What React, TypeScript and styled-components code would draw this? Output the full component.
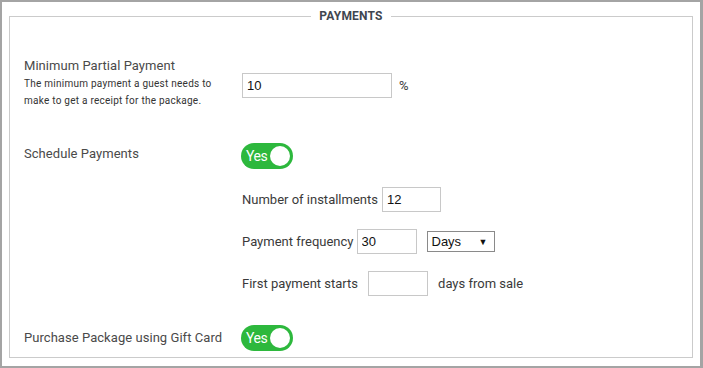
import React from "react";
import styled, { createGlobalStyle } from "styled-components";

const GlobalStyle = createGlobalStyle`
    html, body {
        margin: 0;
        padding: 0;
        background: #ffffff;
    }
    * {
        box-sizing: border-box;
    }
`;

const StyledFrame = styled.div`
    width: 703px;
    height: 368px;
    display: flex;
    flex-direction: column;
    border: 2px solid #a4a4a4;
    border-right-width: 3px;
    padding: 7px 7px 8px 7px;
    background: #fff;
    font-family: Roboto, "Liberation Sans", sans-serif;
    color: #444;
`;
StyledFrame.displayName = "StyledFrame";

const StyledFieldset = styled.fieldset`
    flex: 1;
    margin: 0;
    padding: 0 14px;
    border: 1px solid #cbcbcb;
    min-width: 0;
    > legend {
        margin: 0 auto;
        padding: 0 8px;
        font-size: 12px;
        line-height: 14px;
        font-weight: 700;
        color: #3f4650;
        letter-spacing: 0.2px;
    }
`;
StyledFieldset.displayName = "StyledFieldset";

const StyledRow = styled.div<{ $top: number; $align?: string }>`
    display: grid;
    grid-template-columns: 218px 1fr;
    align-items: ${props => props.$align || "center"};
    margin-top: ${props => props.$top}px;
`;
StyledRow.displayName = "StyledRow";

const StyledTitle = styled.div`
    font-size: 13px;
    line-height: 18px;
    color: #4a4a4a;
    letter-spacing: 0.05px;
`;
StyledTitle.displayName = "StyledTitle";

const StyledDescription = styled.div`
    font-size: 10px;
    line-height: 17px;
    color: #333;
    letter-spacing: 0.25px;
`;
StyledDescription.displayName = "StyledDescription";

const StyledControls = styled.div<{ $top?: number }>`
    display: flex;
    align-items: center;
    gap: 7px;
    margin-top: ${props => props.$top || 0}px;
    font-size: 13px;
    color: #3a3a3a;
`;
StyledControls.displayName = "StyledControls";

const StyledSubList = styled.div`
    display: flex;
    flex-direction: column;
    gap: 17px;
    margin-top: 18px;
`;
StyledSubList.displayName = "StyledSubList";

const StyledSubRow = styled.div<{ $gap: number }>`
    display: flex;
    align-items: center;
    height: 25px;
    gap: ${props => props.$gap}px;
    font-size: 13px;
    color: #3a3a3a;
`;
StyledSubRow.displayName = "StyledSubRow";

const StyledInput = styled.input<{ $width: number }>`
    width: ${props => props.$width}px;
    height: 25px;
    border: 1px solid #c8c8c8;
    border-radius: 0;
    padding: 0 4px;
    font-family: "Liberation Sans", Arial, sans-serif;
    font-size: 13px;
    color: #111;
    background: #fff;
    outline: none;
`;
StyledInput.displayName = "StyledInput";

const StyledSelect = styled.div`
    width: 68px;
    height: 21px;
    border: 1px solid #8a8a8a;
    display: flex;
    align-items: center;
    justify-content: space-between;
    padding: 0 6px 0 4px;
    margin-left: 7px;
    font-family: "Liberation Sans", Arial, sans-serif;
    font-size: 13px;
    color: #111;
    > span:last-child {
        font-size: 9px;
    }
`;
StyledSelect.displayName = "StyledSelect";

const StyledToggle = styled.div`
    width: 52px;
    height: 26px;
    margin-left: -1px;
    border-radius: 13px;
    background: #2db83d;
    display: flex;
    align-items: center;
    justify-content: space-between;
    padding: 0 3px 0 5px;
    color: #fff;
    font-size: 14px;
    letter-spacing: -0.4px;
    > i {
        width: 20px;
        height: 20px;
        border-radius: 50%;
        background: #fff;
    }
`;
StyledToggle.displayName = "StyledToggle";

const Toggle = () => (
    <StyledToggle>
        <span>Yes</span>
        <i />
    </StyledToggle>
);

export default function App() {
    return (
        <>
            <GlobalStyle />
            <StyledFrame>
                <StyledFieldset>
                    <legend>PAYMENTS</legend>
                    <StyledRow $top={34} $align="start">
                        <div>
                            <StyledTitle>Minimum Partial Payment</StyledTitle>
                            <StyledDescription>
                                The minimum payment a guest needs to<br />
                                make to get a receipt for the package.
                            </StyledDescription>
                        </div>
                        <StyledControls $top={16}>
                            <StyledInput $width={150} defaultValue="10" />
                            <span>%</span>
                        </StyledControls>
                    </StyledRow>
                    <StyledRow $top={34} $align="start">
                        <StyledTitle style={{ marginTop: 2 }}>Schedule Payments</StyledTitle>
                        <div>
                            <Toggle />
                            <StyledSubList>
                                <StyledSubRow $gap={4}>
                                    <span>Number of installments</span>
                                    <StyledInput $width={59} defaultValue="12" />
                                </StyledSubRow>
                                <StyledSubRow $gap={3}>
                                    <span>Payment frequency</span>
                                    <StyledInput $width={60} defaultValue="30" />
                                    <StyledSelect>
                                        <span>Days</span>
                                        <span>▼</span>
                                    </StyledSelect>
                                </StyledSubRow>
                                <StyledSubRow $gap={10}>
                                    <span>First payment starts</span>
                                    <StyledInput $width={60} defaultValue="" />
                                    <span>days from sale</span>
                                </StyledSubRow>
                            </StyledSubList>
                        </div>
                    </StyledRow>
                    <StyledRow $top={29}>
                        <StyledTitle>Purchase Package using Gift Card</StyledTitle>
                        <Toggle />
                    </StyledRow>
                </StyledFieldset>
            </StyledFrame>
        </>
    );
}
